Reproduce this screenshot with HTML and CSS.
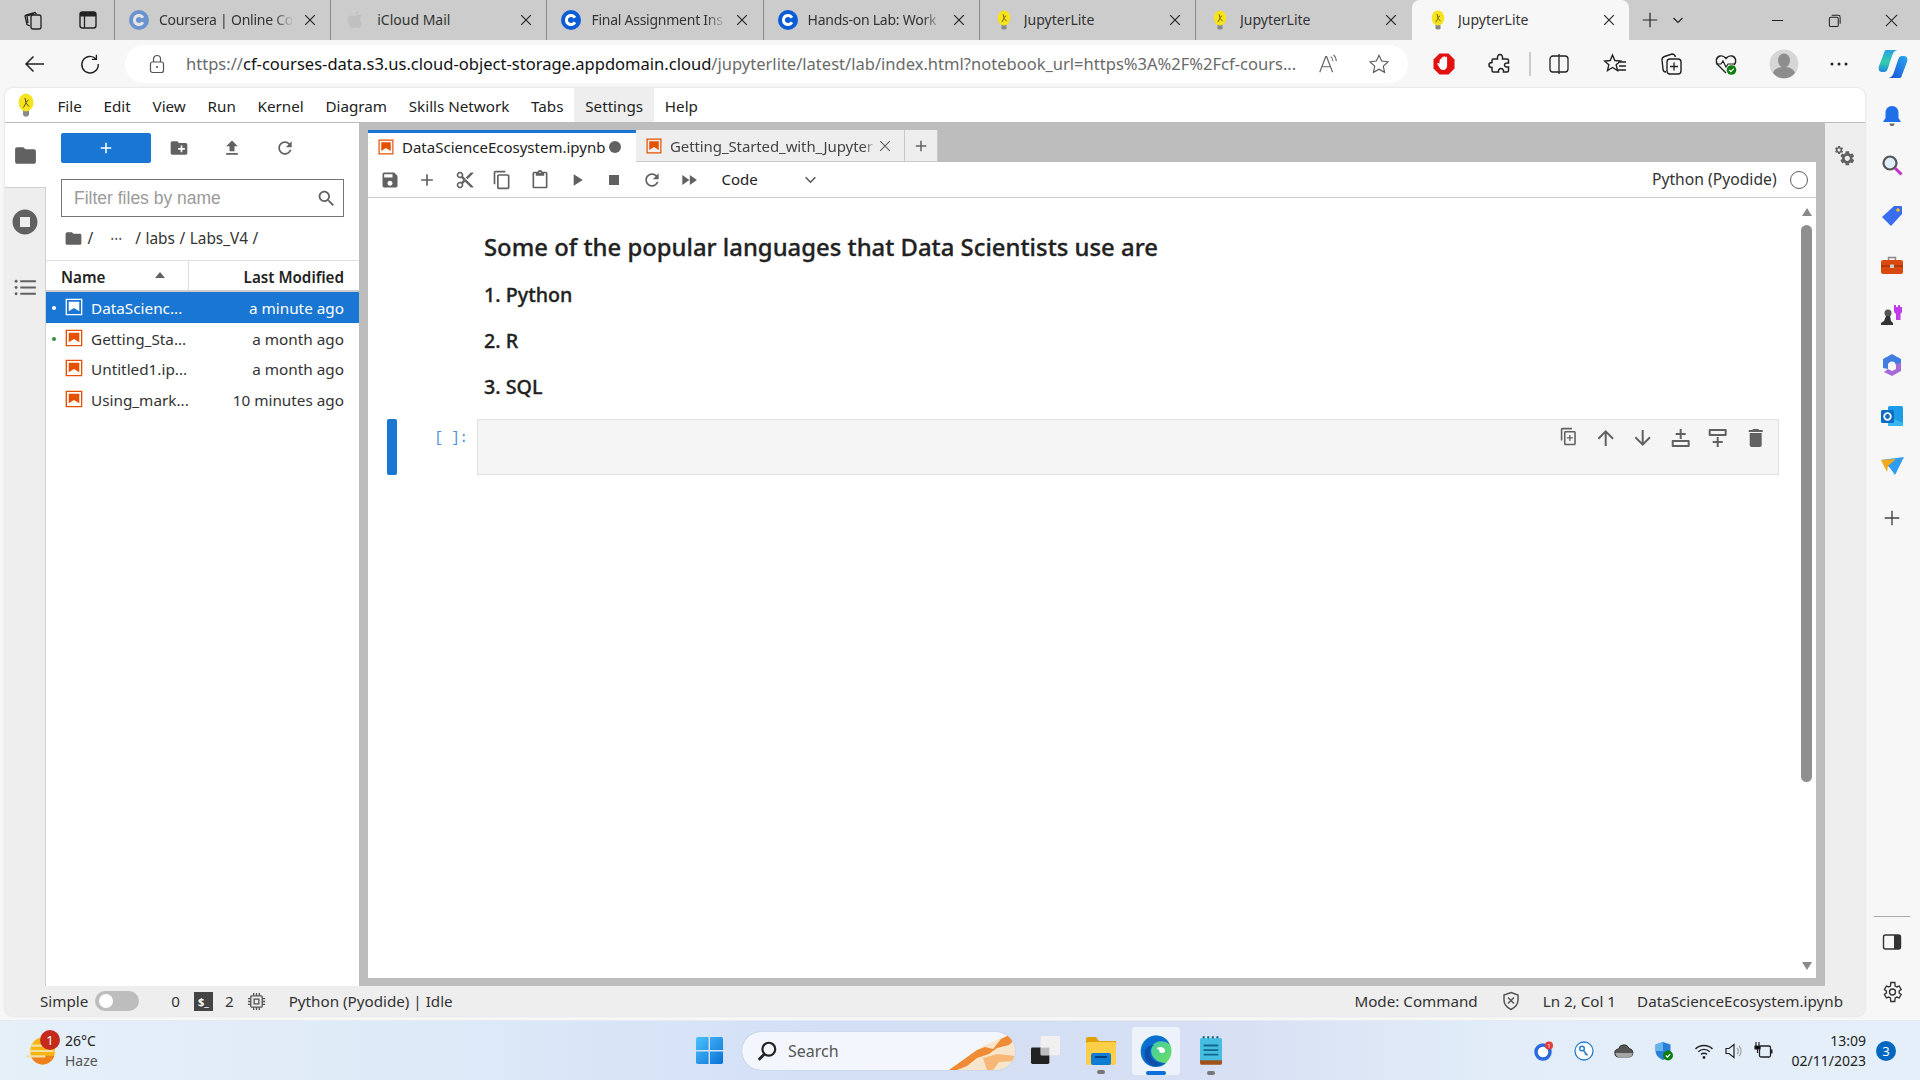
FILE: index.html
```html
<!doctype html>
<html>
<head>
<meta charset="utf-8">
<title>JupyterLite</title>
<link rel="stylesheet" href="styles.css">
</head>
<body>
<svg class="defs" width="0" height="0">
  <symbol id="i-save" viewBox="0 0 24 24"><path d="M17 3H5c-1.11 0-2 .9-2 2v14c0 1.1.89 2 2 2h14c1.1 0 2-.9 2-2V7l-4-4zm-5 16c-1.66 0-3-1.34-3-3s1.34-3 3-3 3 1.34 3 3-1.34 3-3 3zm3-10H5V5h10v4z"/></symbol>
  <symbol id="i-add" viewBox="0 0 24 24"><path d="M19 13h-6v6h-2v-6H5v-2h6V5h2v6h6v2z"/></symbol>
  <symbol id="i-cut" viewBox="0 0 24 24"><path d="M9.64 7.64c.23-.5.36-1.05.36-1.64 0-2.21-1.79-4-4-4S2 3.79 2 6s1.79 4 4 4c.59 0 1.14-.13 1.64-.36L10 12l-2.36 2.36C7.14 14.13 6.59 14 6 14c-2.21 0-4 1.79-4 4s1.79 4 4 4 4-1.79 4-4c0-.59-.13-1.14-.36-1.64L12 14l7 7h3v-1L9.64 7.64zM6 8c-1.1 0-2-.89-2-2s.9-2 2-2 2 .89 2 2-.9 2-2 2zm0 12c-1.1 0-2-.89-2-2s.9-2 2-2 2 .89 2 2-.9 2-2 2zm6-7.5c-.28 0-.5-.22-.5-.5s.22-.5.5-.5.5.22.5.5-.22.5-.5.5zM19 3l-6 6 2 2 7-7V3z"/></symbol>
  <symbol id="i-copy" viewBox="0 0 24 24"><path d="M16 1H4c-1.1 0-2 .9-2 2v14h2V3h12V1zm3 4H8c-1.1 0-2 .9-2 2v14c0 1.1.9 2 2 2h11c1.1 0 2-.9 2-2V7c0-1.1-.9-2-2-2zm0 16H8V7h11v14z"/></symbol>
  <symbol id="i-paste" viewBox="0 0 24 24"><path d="M19 2h-4.18C14.4.84 13.3 0 12 0c-1.3 0-2.4.84-2.82 2H5c-1.1 0-2 .9-2 2v16c0 1.1.9 2 2 2h14c1.1 0 2-.9 2-2V4c0-1.1-.9-2-2-2zm-7 0c.55 0 1 .45 1 1s-.45 1-1 1-1-.45-1-1 .45-1 1-1zm7 18H5V4h2v3h10V4h2v16z"/></symbol>
  <symbol id="i-run" viewBox="0 0 24 24"><path d="M8 5v14l11-7z"/></symbol>
  <symbol id="i-stop" viewBox="0 0 24 24"><path d="M6 6h12v12H6z"/></symbol>
  <symbol id="i-refresh" viewBox="0 0 24 24"><path d="M17.65 6.35C16.2 4.9 14.21 4 12 4c-4.42 0-7.99 3.58-7.99 8s3.57 8 7.99 8c3.73 0 6.84-2.55 7.73-6h-2.08c-.82 2.33-3.04 4-5.65 4-3.31 0-6-2.69-6-6s2.69-6 6-6c1.66 0 3.14.69 4.22 1.78L13 11h7V4l-2.35 2.35z"/></symbol>
  <symbol id="i-ff" viewBox="0 0 24 24"><path d="M4 18l8.5-6L4 6v12zm9-12v12l8.5-6L13 6z"/></symbol>
  <symbol id="i-upload" viewBox="0 0 24 24"><path d="M9 16h6v-6h4l-7-7-7 7h4v6zm-4 2h14v2H5z"/></symbol>
  <symbol id="i-folder" viewBox="0 0 24 24"><path d="M10 4H4c-1.1 0-1.99.9-1.99 2L2 18c0 1.1.9 2 2 2h16c1.1 0 2-.9 2-2V8c0-1.1-.9-2-2-2h-8l-2-2z"/></symbol>
  <symbol id="i-newfolder" viewBox="0 0 24 24"><path d="M20 6h-8l-2-2H4c-1.11 0-1.99.89-1.99 2L2 18c0 1.11.89 2 2 2h16c1.11 0 2-.89 2-2V8c0-1.11-.89-2-2-2zm-1 8h-3v3h-2v-3h-3v-2h3V9h2v3h3v2z"/></symbol>
  <symbol id="i-search" viewBox="0 0 24 24"><path d="M15.5 14h-.79l-.28-.27C15.41 12.59 16 11.11 16 9.5 16 5.91 13.09 3 9.5 3S3 5.91 3 9.5 5.91 16 9.5 16c1.61 0 3.09-.59 4.23-1.57l.27.28v.79l5 4.99L20.49 19l-4.99-5zm-6 0C7.01 14 5 11.99 5 9.5S7.01 5 9.5 5 14 7.01 14 9.5 11.99 14 9.5 14z"/></symbol>
  <symbol id="i-stopcircle" viewBox="0 0 24 24"><path d="M12 2C6.48 2 2 6.48 2 12s4.48 10 10 10 10-4.48 10-10S17.52 2 12 2zm4 14H8V8h8v8z"/></symbol>
  <symbol id="i-list" viewBox="0 0 24 24"><path d="M7 5h15v2H7zM7 11h15v2H7zM7 17h15v2H7z"/><circle cx="3" cy="6" r="1.4"/><circle cx="3" cy="12" r="1.4"/><circle cx="3" cy="18" r="1.4"/></symbol>
  <symbol id="i-up" viewBox="0 0 24 24"><path d="M4 12l1.41 1.41L11 7.83V20h2V7.83l5.58 5.59L20 12l-8-8-8 8z"/></symbol>
  <symbol id="i-down" viewBox="0 0 24 24"><path d="M20 12l-1.41-1.41L13 16.17V4h-2v12.17l-5.58-5.59L4 12l8 8 8-8z"/></symbol>
  <symbol id="i-trash" viewBox="0 0 24 24"><path d="M6 19c0 1.1.9 2 2 2h8c1.1 0 2-.9 2-2V7H6v12zM19 4h-3.5l-1-1h-5l-1 1H5v2h14V4z"/></symbol>
  <symbol id="i-dup" viewBox="0 0 24 24"><path d="M16 1H4c-1.1 0-2 .9-2 2v14h2V3h12V1zm3 4H8c-1.1 0-2 .9-2 2v14c0 1.1.9 2 2 2h11c1.1 0 2-.9 2-2V7c0-1.1-.9-2-2-2zm0 16H8V7h11v14zM12.7 10h1.6v3h3v1.6h-3v3h-1.6v-3h-3V13h3z"/></symbol>
  <symbol id="i-addabove" viewBox="0 0 24 24"><path d="M11 3h2v4h4v2h-4v4h-2V9H7V7h4zM4 14h16a1 1 0 0 1 1 1v5a1 1 0 0 1-1 1H4a1 1 0 0 1-1-1v-5a1 1 0 0 1 1-1zm1 2v3h14v-3z" fill-rule="evenodd"/></symbol>
  <symbol id="i-addbelow" viewBox="0 0 24 24"><path d="M4 3h16a1 1 0 0 1 1 1v5a1 1 0 0 1-1 1H4a1 1 0 0 1-1-1V4a1 1 0 0 1 1-1zm1 2v3h14V5zM11 11h2v4h4v2h-4v4h-2v-4H7v-2h4z" fill-rule="evenodd"/></symbol>
  <symbol id="i-gear" viewBox="0 0 24 24"><path d="M19.14 12.94c.04-.3.06-.61.06-.94 0-.32-.02-.64-.07-.94l2.03-1.58c.18-.14.23-.41.12-.61l-1.92-3.32c-.12-.22-.37-.29-.59-.22l-2.39.96c-.5-.38-1.03-.7-1.62-.94l-.36-2.54c-.04-.24-.24-.41-.48-.41h-3.84c-.24 0-.43.17-.47.41l-.36 2.54c-.59.24-1.13.57-1.62.94l-2.39-.96c-.22-.08-.47 0-.59.22L2.74 8.87c-.12.21-.08.47.12.61l2.03 1.58c-.05.3-.09.63-.09.94s.02.64.07.94l-2.03 1.58c-.18.14-.23.41-.12.61l1.92 3.32c.12.22.37.29.59.22l2.39-.96c.5.38 1.03.7 1.62.94l.36 2.54c.05.24.24.41.48.41h3.84c.24 0 .44-.17.47-.41l.36-2.54c.59-.24 1.13-.56 1.62-.94l2.39.96c.22.08.47 0 .59-.22l1.92-3.32c.12-.22.07-.47-.12-.61l-2.01-1.58zM12 15.6c-1.98 0-3.6-1.62-3.6-3.6s1.62-3.6 3.6-3.6 3.6 1.62 3.6 3.6-1.62 3.6-3.6 3.6z"/></symbol>
  <symbol id="i-nb" viewBox="0 0 22 22"><path d="M18.7 3.3v15.4H3.3V3.3h15.4m1.5-1.5H1.8v18.3h18.3l.1-18.3z"/><path d="M16.8 15.8l-5.8-3.6-5.8 3.6V5.2h11.6z"/></symbol>
  <symbol id="i-bulb" viewBox="0 0 20 24"><path fill="#888" d="M7 17h6v5l-1.500 1.500h-3L7 22z"/><ellipse cx="10" cy="9.500" rx="7.500" ry="9" fill="#f5e31d"/><path d="M9 5l1 5-2.500 4.500M10 10l3 3.500M10 9l2.500-2" stroke="#5a4d00" stroke-width="1" fill="none"/></symbol>
  <symbol id="i-coursera" viewBox="0 0 24 24"><circle cx="12" cy="12" r="12" fill="#0b5cd5"/><path d="M16.700 9.200a5.500 5.500 0 1 0 0 5.600" stroke="#fff" stroke-width="3.600" fill="none"/></symbol>
  <symbol id="i-x" viewBox="0 0 16 16"><path d="M2.500 2.500l11 11M13.500 2.500l-11 11" stroke="currentColor" stroke-width="1.300" fill="none"/></symbol>
</svg>

<div class="tabstrip">
  <div class="stripicons">
    <svg class="s22" viewBox="0 0 22 22"><g fill="none" stroke="#222" stroke-width="1.300"><rect x="9" y="6" width="10" height="14" rx="2"/><path d="M8 17l-3-1.500-2-8.500 1-1 9-2.500 1.500 1.500M6 14l-1-7 7-2"/></g></svg>
    <svg class="s22" viewBox="0 0 22 22"><rect x="3" y="3" width="16" height="16" rx="2.500" fill="none" stroke="#222" stroke-width="1.400"/><path d="M3 3h16v4.500H3z" fill="#222"/><path d="M7.500 7v12" stroke="#222" stroke-width="1.300"/></svg>
  </div>
  <div class="btab faded"><svg class="fav"><use href="#i-coursera"/></svg><span class="btab-title fadeout">Coursera | Online Co</span><svg class="btab-x"><use href="#i-x"/></svg></div>
  <div class="btab faded apple"><svg class="fav" viewBox="0 0 20 20"><path fill="#b5b5b5" d="M13.500 1c.1 1.700-1.400 3.400-3 3.300C10.300 2.700 12 1.100 13.500 1zM10.400 5.300c.9 0 1.900-.8 3.300-.8 1.200 0 2.400.6 3.100 1.700-2.700 1.600-2.300 5.300.5 6.500-.6 1.700-2.300 5.300-4.100 5.300-1 0-1.500-.7-2.800-.7s-1.900.7-2.800.7c-2.300 0-4.800-5-4.800-8 0-3.200 2-4.500 3.900-4.500 1.300 0 2.100.8 3.700.8z"/></svg><span class="btab-title">iCloud Mail</span><svg class="btab-x"><use href="#i-x"/></svg></div>
  <div class="btab"><svg class="fav"><use href="#i-coursera"/></svg><span class="btab-title fadeout">Final Assignment Ins</span><svg class="btab-x"><use href="#i-x"/></svg></div>
  <div class="btab"><svg class="fav"><use href="#i-coursera"/></svg><span class="btab-title fadeout">Hands-on Lab: Work</span><svg class="btab-x"><use href="#i-x"/></svg></div>
  <div class="btab"><svg class="fav"><use href="#i-bulb"/></svg><span class="btab-title">JupyterLite</span><svg class="btab-x"><use href="#i-x"/></svg></div>
  <div class="btab"><svg class="fav"><use href="#i-bulb"/></svg><span class="btab-title">JupyterLite</span><svg class="btab-x"><use href="#i-x"/></svg></div>
  <div class="btab active"><svg class="fav"><use href="#i-bulb"/></svg><span class="btab-title">JupyterLite</span><svg class="btab-x"><use href="#i-x"/></svg></div>
  <svg class="newtab" viewBox="0 0 20 20"><path d="M10 2v16M2 10h16" stroke="#222" stroke-width="1.300"/></svg>
  <svg class="tabmenu" viewBox="0 0 12 12"><path d="M1.500 4l4.500 4.500L10.500 4" stroke="#222" stroke-width="1.200" fill="none"/></svg>
  <div class="wincontrols">
    <svg viewBox="0 0 16 16"><path d="M2 8h12" stroke="#222" stroke-width="1.100"/></svg>
    <svg viewBox="0 0 16 16"><rect x="2.500" y="4.500" width="9.500" height="10" rx="1.500" fill="none" stroke="#222" stroke-width="1.100"/><path d="M5 2.500h7a2 2 0 0 1 2 2v7" fill="none" stroke="#222" stroke-width="1.100"/></svg>
    <svg viewBox="0 0 16 16"><path d="M2 2l12 12M14 2L2 14" stroke="#222" stroke-width="1.100"/></svg>
  </div>
</div>

<div class="navbar">
  <svg class="nav-back" viewBox="0 0 24 24"><path d="M21 12H3.500M10.500 4.500L3 12l7.500 7.500" stroke="#222" stroke-width="1.500" fill="none"/></svg>
  <svg class="nav-reload" viewBox="0 0 24 24"><path d="M18.500 6.500A9 9 0 1 0 21 12M19 2v5h-5" stroke="#222" stroke-width="1.500" fill="none"/></svg>
  <div class="addressbar">
    <svg class="lock" viewBox="0 0 20 20"><rect x="3.500" y="8" width="13" height="10.500" rx="2" fill="none" stroke="#555" stroke-width="1.200"/><path d="M6.500 8V5a3.500 3.500 0 0 1 7 0v3" fill="none" stroke="#555" stroke-width="1.200"/><circle cx="10" cy="13" r="1.100" fill="#555"/></svg>
    <span class="url"><span class="dim">https://</span>cf-courses-data.s3.us.cloud-object-storage.appdomain.cloud<span class="dim">/jupyterlite/latest/lab/index.html?notebook_url=https%3A%2F%2Fcf-cours...</span></span>
    <svg class="addr-read" viewBox="0 0 24 24"><path d="M3 21L9.500 4h1L17 21M6 15h8" stroke="#666" stroke-width="1.300" fill="none"/><path d="M15 4a6 6 0 0 1 2.500 5M18 2a9 9 0 0 1 3 7" stroke="#666" stroke-width="1.100" fill="none"/></svg>
    <svg class="addr-star" viewBox="0 0 24 24"><path d="M12 2.500l2.900 6.300 6.900.8-5.100 4.700 1.400 6.800-6.100-3.400-6.100 3.400 1.400-6.800L2.200 9.600l6.900-.8z" stroke="#555" stroke-width="1.200" fill="none"/></svg>
  </div>
  <div class="navicons">
    <svg class="n1" viewBox="0 0 24 24"><path fill="#e0110f" d="M7.500 1.500h9l6 6v9l-6 6h-9l-6-6v-9z"/><path fill="#fff" d="M7.500 10c0-2 .5-3 1-3s.7.500.7 1c0-2 .6-3 1.100-3s.8.500.8 1.500c0-1.500.6-2.500 1.100-2.500s.9.800.9 2c.2-1 .7-1.500 1.200-1.500s.8.800.8 2v7c0 2.500-1.500 4.500-4 4.500-2 0-3-1-4-3l-2-3.500c1-1 2-.5 2.400.5z"/></svg>
    <svg class="n2" viewBox="0 0 24 24"><path d="M5 7h4.500c-.5-3 1-4.500 2.500-4.500s3 1.500 2.500 4.500H19c1 0 1.500.5 1.500 1.500V11c-3-.5-4 1-4 2s1 2.500 4 2v3.500c0 1-.5 1.500-1.500 1.500h-3.500c.5-2-1-3.500-2.500-3.500s-3 1.500-2.500 3.500H5.500c-1 0-1.500-.5-1.500-1.500v-3c-2 0-3-1-3-2.500s1-2.500 3-2.500V8.500C4 7.500 4 7 5 7z" fill="none" stroke="#222" stroke-width="1.500"/></svg>
    <span class="navsep"></span>
    <svg class="n3" viewBox="0 0 24 24"><rect x="3" y="4" width="18" height="16" rx="3" fill="none" stroke="#222" stroke-width="1.300"/><path d="M12 2v20" stroke="#222" stroke-width="1.300"/></svg>
    <svg class="n4" viewBox="0 0 24 24"><path d="M9.500 3l2.300 5.500 5.700.5-4.300 3.800 1.300 5.700-5-3-5 3 1.300-5.700L1.500 9l5.700-.5zM15 10h8M16 14h7M15 18h8" fill="none" stroke="#222" stroke-width="1.400"/></svg>
    <svg class="n5" viewBox="0 0 24 24"><path d="M7 20c-2 0-3-1-3-3L3 8c0-2 1-3 2.500-3.500L13 2c2 0 3 1 3.500 3" fill="none" stroke="#222" stroke-width="1.400"/><rect x="8" y="7" width="14" height="15" rx="3" fill="none" stroke="#222" stroke-width="1.400"/><path d="M15 10.500v8M11 14.500h8" stroke="#222" stroke-width="1.300"/></svg>
    <svg class="n6" viewBox="0 0 24 24"><path d="M12 21L4 13c-3-3-2-8 2-9 2.500-.5 4.500.5 6 2.500 1.500-2 3.500-3 6-2.500 4 1 5 6 2 9" fill="none" stroke="#222" stroke-width="1.400"/><path d="M2 12h5l2-3 3 6 2-3h6" fill="none" stroke="#222" stroke-width="1.200"/><circle cx="17.500" cy="18" r="4.800" fill="#107c10"/><path d="M15.300 18l1.600 1.600 2.900-3" stroke="#fff" stroke-width="1.200" fill="none"/></svg>
    <svg class="n7" viewBox="0 0 30 30"><circle cx="15" cy="15" r="14.500" fill="#d6d6d6"/><ellipse cx="15" cy="11.500" rx="6" ry="7" fill="#8d8d8d"/><path d="M4 24c2-5 6-6 11-6s9 1 11 6a14 14 0 0 1-22 0z" fill="#8d8d8d"/></svg>
    <svg class="n8" viewBox="0 0 24 24"><circle cx="5" cy="12" r="1.500" fill="#222"/><circle cx="12" cy="12" r="1.500" fill="#222"/><circle cx="19" cy="12" r="1.500" fill="#222"/></svg>
    <svg class="n9" viewBox="0 0 30 30"><defs><linearGradient id="cp1" x1="0" y1="0" x2="0" y2="1"><stop offset="0" stop-color="#2a9fe8"/><stop offset=".55" stop-color="#34cfa8"/><stop offset="1" stop-color="#1f86dc"/></linearGradient><linearGradient id="cp2" x1="1" y1="0" x2="0" y2="1"><stop offset="0" stop-color="#2aa8f0"/><stop offset="1" stop-color="#1a50d8"/></linearGradient></defs><path fill="url(#cp1)" d="M8 1h11c-3 1-4 3-5 6l-4 12c-1 3-2 4-4 4H4c-3 0-4-3-3-6L6 4c.5-2 1-3 2-3z"/><path fill="url(#cp2)" d="M22 29H11c3-1 4-3 5-6l4-12c1-3 2-4 4-4h2c3 0 4 3 3 6l-5 13c-.5 2-1 3-2 3z"/></svg>
  </div>
</div>

<div class="pagearea">
  <div class="page">
    <div class="menubar">
      <svg class="menulogo"><use href="#i-bulb"/></svg>
      <span class="menu">File</span><span class="menu">Edit</span><span class="menu">View</span><span class="menu">Run</span><span class="menu">Kernel</span><span class="menu">Diagram</span><span class="menu">Skills Network</span><span class="menu">Tabs</span><span class="menu open">Settings</span><span class="menu">Help</span>
    </div>

    <div class="workarea">
      <div class="activity">
        <div class="act on"><svg><use href="#i-folder"/></svg></div>
        <div class="act two"><svg class="big"><use href="#i-stopcircle"/></svg></div>
        <div class="act"><svg><use href="#i-list"/></svg></div>
      </div>

      <div class="filepanel">
        <div class="filetools">
          <div class="newbtn"><svg><use href="#i-add"/></svg></div>
          <svg class="ft"><use href="#i-newfolder"/></svg>
          <svg class="ft"><use href="#i-upload"/></svg>
          <svg class="ft"><use href="#i-refresh"/></svg>
        </div>
        <div class="filter"><span>Filter files by name</span><svg><use href="#i-search"/></svg></div>
        <div class="crumbs">
          <svg><use href="#i-folder"/></svg><span class="c1">/</span>
          <span class="dots">•••</span><span>/</span><span>labs</span><span>/</span><span>Labs_V4</span><span>/</span>
        </div>
        <div class="listhead">
          <div class="col-name">Name<span class="caret"></span></div>
          <div class="col-mod">Last Modified</div>
        </div>
        <div class="filerow sel"><i class="dot"></i><svg><use href="#i-nb"/></svg><span class="fname">DataScienc...</span><span class="fdate">a minute ago</span></div>
        <div class="filerow"><i class="dot green"></i><svg><use href="#i-nb"/></svg><span class="fname">Getting_Sta...</span><span class="fdate">a month ago</span></div>
        <div class="filerow"><i class="dot none"></i><svg><use href="#i-nb"/></svg><span class="fname">Untitled1.ip...</span><span class="fdate">a month ago</span></div>
        <div class="filerow"><i class="dot none"></i><svg><use href="#i-nb"/></svg><span class="fname">Using_mark...</span><span class="fdate">10 minutes ago</span></div>
      </div>

      <div class="main">
        <div class="doctabs">
          <div class="doctab cur"><svg><use href="#i-nb"/></svg><span class="dt-name">DataScienceEcosystem.ipynb</span><i class="dirty"></i></div>
          <div class="doctab two"><svg><use href="#i-nb"/></svg><span class="dt-name fade">Getting_Started_with_Jupyter</span><svg class="dt-x"><use href="#i-x"/></svg></div>
          <div class="doctab plus"><svg><use href="#i-add"/></svg></div>
        </div>
        <div class="nbtools">
          <svg><use href="#i-save"/></svg>
          <svg><use href="#i-add"/></svg>
          <svg><use href="#i-cut"/></svg>
          <svg><use href="#i-copy"/></svg>
          <svg><use href="#i-paste"/></svg>
          <svg><use href="#i-run"/></svg>
          <svg><use href="#i-stop"/></svg>
          <svg><use href="#i-refresh"/></svg>
          <svg><use href="#i-ff"/></svg>
          <span class="celltype">Code</span>
          <svg class="chev" viewBox="0 0 12 12"><path d="M1.500 4l4.500 4.500L10.500 4" stroke="#555" stroke-width="1.400" fill="none"/></svg>
          <span class="kernel">Python (Pyodide)</span>
          <i class="kstatus"></i>
        </div>
        <div class="notebook">
          <div class="cells">
            <h1>Some of the popular languages that Data Scientists use are</h1>
            <p>1. Python</p>
            <p>2. R</p>
            <p>3. SQL</p>
            <div class="codecell">
              <div class="collapser"></div>
              <div class="prompt">[ ]:</div>
              <div class="input">
                <svg class="cell-dup"><use href="#i-dup"/></svg>
                <svg><use href="#i-up"/></svg>
                <svg><use href="#i-down"/></svg>
                <svg><use href="#i-addabove"/></svg>
                <svg><use href="#i-addbelow"/></svg>
                <svg><use href="#i-trash"/></svg>
              </div>
            </div>
          </div>
          <div class="scroll">
            <i class="arr up"></i>
            <div class="track"><div class="thumb"></div></div>
            <i class="arr dn"></i>
          </div>
        </div>
      </div>

      <div class="rightbar"><svg viewBox="0 0 24 24"><use href="#i-gear" x="5" y="5" width="19" height="19"/><use href="#i-gear" x="0" y="0" width="11" height="11"/></svg></div>
    </div>

    <div class="statusbar">
      <span class="simple">Simple</span><span class="toggle"><i></i></span>
      <span class="st-0">0</span>
      <span class="term">$_</span>
      <span class="st-2">2</span>
      <svg class="chip" viewBox="0 0 20 20"><g fill="none" stroke="#555" stroke-width="1.400"><rect x="4" y="4" width="12" height="12" rx="1"/><rect x="7.500" y="7.500" width="5" height="5"/><path d="M7 1v3M10 1v3M13 1v3M7 16v3M10 16v3M13 16v3M1 7h3M1 10h3M1 13h3M16 7h3M16 10h3M16 13h3"/></g></svg>
      <span class="st-kernel">Python (Pyodide) | Idle</span>
      <span class="st-mode">Mode: Command</span>
      <svg class="shield" viewBox="0 0 20 20"><path d="M10 1.500l7 2.500v5c0 4.500-3 7.500-7 9.500-4-2-7-5-7-9.500V4z" fill="none" stroke="#555" stroke-width="1.500"/><path d="M7 6.500l6 6M13 6.500l-6 6" stroke="#555" stroke-width="1.500"/></svg>
      <span class="st-ln">Ln 2, Col 1</span>
      <span class="st-file">DataScienceEcosystem.ipynb</span>
    </div>
  </div>

  <div class="edgebar">
    <svg class="eb first" viewBox="0 0 24 24"><path fill="#1f6fe8" d="M12 2c-4 0-6.500 3-6.500 7v5L3 18h18l-2.500-4V9c0-4-2.500-7-6.500-7z"/><path fill="#666" d="M9.500 19.500h5a2.500 2.500 0 0 1-5 0z"/></svg>
    <svg class="eb" viewBox="0 0 24 24"><circle cx="10" cy="10" r="6.500" fill="#dfeefa" stroke="#555" stroke-width="2.200"/><path d="M15 15l6.500 6.500" stroke="#c62fc9" stroke-width="3"/></svg>
    <svg class="eb" viewBox="0 0 24 24"><path fill="#3a6cf0" d="M14 2h7a1 1 0 0 1 1 1v7L11 22 2 13z"/><circle cx="18" cy="6" r="1.800" fill="#f5c518"/></svg>
    <svg class="eb box" viewBox="0 0 24 24"><path d="M8.500 6V3.500h7V6" fill="none" stroke="#888" stroke-width="1.500"/><rect x="1" y="6" width="22" height="14" rx="2" fill="#d9480f"/><path d="M1 12h22" stroke="#a5330a" stroke-width="1.500"/><rect x="10" y="10.500" width="4" height="3.500" fill="#ccc"/></svg>
    <svg class="eb" viewBox="0 0 24 24"><path fill="#c13ce8" d="M14 2h2v2h2V2h2v2h2V2v7l-1.500 2v6H16v-6L14 9z"/><circle cx="8" cy="10" r="3.500" fill="#555"/><path fill="#333" d="M6 13h4l1 5 2 2v2H1v-2l3-2z"/></svg>
    <svg class="eb" viewBox="0 0 24 24"><path fill="#3f7ee0" d="M12 1l9 5v4l-5 2-4-3-4 2v5l-5-1V6z"/><path fill="#a66ad8" d="M21 10v8l-9 5-8-4 4-3 4 2 4-2v-5z"/><circle cx="12" cy="12" r="3.600" fill="#f7f7f7"/></svg>
    <svg class="eb" viewBox="0 0 24 24"><rect x="8" y="2" width="15" height="20" rx="1.500" fill="#1c9ce8"/><path d="M8 12l15 7v2a1 1 0 0 1-1 1H9a1 1 0 0 1-1-1z" fill="#35b8f0"/><rect x="1" y="6" width="13" height="13" rx="1.500" fill="#0a6cc4"/><circle cx="7.500" cy="12.500" r="3.300" fill="none" stroke="#fff" stroke-width="1.800"/></svg>
    <svg class="eb" viewBox="0 0 24 24"><path fill="#2e9cf0" d="M1 6l23-3-9 18-5-7z"/><path fill="#f2a81d" d="M1 6l15-1L8 12l-1 6z"/></svg>
    <svg class="eb plus" viewBox="0 0 24 24"><path d="M12 4v16M4 12h16" stroke="#444" stroke-width="1.500"/></svg>
    <div class="eb-bottom">
      <span class="eb-line"></span>
      <svg class="eb" viewBox="0 0 24 24"><rect x="3.500" y="5" width="17" height="14" rx="2" fill="none" stroke="#333" stroke-width="1.400"/><path d="M14 5h5a1.500 1.500 0 0 1 1.500 1.500v11a1.500 1.500 0 0 1-1.500 1.500h-5z" fill="#333"/></svg>
      <svg class="eb gear" viewBox="0 0 24 24"><path d="M19.140 12.940c.04-.3.060-.61.060-.94s-.02-.64-.07-.94l2.030-1.580-2-3.470-2.390.96c-.5-.38-1.030-.7-1.620-.94L14.800 2.500h-4l-.36 3.530c-.59.24-1.130.57-1.620.94l-2.390-.96-2 3.470 2.030 1.580c-.05.3-.09.630-.09.940s.02.640.07.940L4.410 14.520l2 3.470 2.390-.96c.5.380 1.030.700 1.620.940l.36 3.530h4l.36-3.530c.59-.24 1.130-.56 1.620-.94l2.390.96 2-3.470z" fill="none" stroke="#333" stroke-width="1.400"/><circle cx="12.500" cy="12" r="3" fill="none" stroke="#333" stroke-width="1.400"/></svg>
    </div>
  </div>
</div>

<div class="taskbar">
  <div class="weather">
    <svg class="wicon" viewBox="0 0 28 26"><ellipse cx="15.500" cy="13" rx="11.500" ry="12.500" fill="#f7b50f"/><path d="M15.500 25.500c-5 0-9.500-3-11-8h22c-1.500 5-6 8-11 8z" fill="#f0801a"/><path d="M5 8h15M3 13h23M0 18h18" stroke="#f2dfa8" stroke-width="2"/></svg>
    <span class="wbadge">1</span>
    <div class="wtext"><div>26°C</div><div class="wsub">Haze</div></div>
  </div>
  <div class="tb-center">
    <svg class="startbtn" viewBox="0 0 30 30"><defs><linearGradient id="win" x1="0" y1="0" x2="1" y2="1"><stop offset="0" stop-color="#4cc3fa"/><stop offset="1" stop-color="#0a6fd8"/></linearGradient></defs><path fill="url(#win)" d="M1 3a2 2 0 0 1 2-2h11v13.500H1zM15.500 1H27a2 2 0 0 1 2 2v11.500H15.500zM1 16h13v13H3a2 2 0 0 1-2-2zM15.500 16H29v11a2 2 0 0 1-2 2H15.500z"/></svg>
    <div class="searchbox">
      <svg class="sb-icon" viewBox="0 0 24 24"><circle cx="14" cy="10" r="7" fill="none" stroke="#222" stroke-width="2.400"/><path d="M9 15.500L3 21.500" stroke="#222" stroke-width="3"/></svg>
      <span class="sb-text">Search</span>
      <svg class="sb-art" viewBox="0 0 66 38"><path fill="#f7e6cc" d="M0 38L34 14 66 0v38z"/><path fill="#ef8a35" d="M0 38l14-10 14-10 8-3 8 2 8-10 10-5 4 5-6 6-12 3-8 6-12 4-10 8-10 4z"/><path fill="#f7b777" d="M34 26l14-4 18 2v5l-16 1-6 8h-6z"/></svg>
    </div>
    <svg class="tv" viewBox="0 0 30 30"><rect x="0" y="12" width="19" height="17" rx="1.500" fill="#222"/><rect x="10" y="0" width="20" height="20" rx="1.500" fill="#f0f0f0"/><rect x="10" y="12" width="9" height="8" fill="#bdbdbd"/></svg>
    <div class="tbapp app-f"><svg viewBox="0 0 30 28"><path fill="#dfa009" d="M0 2a2 2 0 0 1 2-2h8l3 4h17v6H0z"/><rect y="5" width="30" height="23" rx="2" fill="#fdcf48"/><rect x="5" y="16" width="20" height="12" rx="2" fill="#0f7cd6"/><path d="M9 20h12" stroke="#073f7a" stroke-width="2"/></svg><i class="rundot"></i></div>
    <div class="tbapp app-e on"><svg viewBox="0 0 32 32"><defs><linearGradient id="ed1" x1="0" y1="0" x2="1" y2="1"><stop offset="0" stop-color="#33c5c0"/><stop offset="1" stop-color="#6fe05a"/></linearGradient></defs><circle cx="16" cy="16" r="15.500" fill="url(#ed1)"/><path fill="#0a6fd0" d="M1 15C2 6 9 .500 16 .500c7 0 12 4 13.500 9C27 6.500 22 6 18.500 6.500 12 8 10 14 12 20c2 5 8 8 14 8-3 3-7 4-10 4C7 32 0 25 1 15z"/><path fill="#0c4fa8" d="M14 31c-6-1-11-7-9-15 1-4 5-6 9-6 -3 2-5 5-3.500 10 1 5 7 8 12 8.500C20 31 17 31.500 14 31z"/><path fill="#fff" d="M17 13c3-2 7-1 8 2 .5 2-1 3-3 3-2 0-3.500-1-2.500-3-1-.5-2-.5-2.500-2z"/></svg><i class="rundot act-bar"></i></div>
    <div class="tbapp app-n"><svg viewBox="0 0 24 32"><path d="M4 0v4M9 0v4M14 0v4M19 0v4" stroke="#0c5d83" stroke-width="2.200"/><rect y="2" width="24" height="26" rx="1.500" fill="#45bde0"/><path d="M4 10h16M4 15h16M4 20h16" stroke="#10668d" stroke-width="2"/><path d="M0 26h24v3a2 2 0 0 1-2 2H2a2 2 0 0 1-2-2z" fill="#a0521c"/></svg><i class="rundot"></i></div>
  </div>
  <div class="tray">
    <svg viewBox="0 0 20 20"><circle cx="9" cy="11" r="7" fill="#fff" stroke="#2b6be0" stroke-width="3.500"/><circle cx="15" cy="4.500" r="4" fill="#e53935"/><text x="15" y="7" class="traynum">1</text></svg>
    <svg viewBox="0 0 20 20"><circle cx="10" cy="10" r="9" fill="#fff" stroke="#2b7dd0" stroke-width="1.300"/><circle cx="8" cy="7.500" r="2.300" fill="none" stroke="#2b7dd0" stroke-width="1.500"/><path d="M9.500 9.500l4 5M12 12.500l-1.200 1" stroke="#2b7dd0" stroke-width="1.500"/></svg>
    <svg viewBox="0 0 20 20"><path fill="#555" stroke="#222" stroke-width=".8" d="M5 16a4 4 0 0 1-.5-8A5.500 5.500 0 0 1 15 7.500 4.300 4.300 0 0 1 15.500 16z"/><path fill="#a5a5a5" d="M1.500 12h17a4 4 0 0 1-3 4H5a4 4 0 0 1-3.500-4z"/></svg>
    <svg viewBox="0 0 20 20"><path fill="#2680d9" d="M9 1l7.500 2.500v6c0 4.500-3 7.500-7.500 9.500C4.500 17 1.500 14 1.500 9.500v-6z"/><path fill="#66b3ee" d="M9 1v9H1.500V3.500z"/><circle cx="14" cy="14.500" r="5" fill="#107c10"/><path d="M11.800 14.500l1.600 1.600 2.800-3" stroke="#fff" stroke-width="1.200" fill="none"/></svg>
    <svg viewBox="0 0 20 20"><path d="M1.500 8a12 12 0 0 1 17 0M4.300 10.800a8 8 0 0 1 11.400 0M7 13.500a4.200 4.200 0 0 1 6 0" fill="none" stroke="#222" stroke-width="1.400"/><circle cx="10" cy="16.500" r="1.400" fill="#222"/></svg>
    <svg viewBox="0 0 20 20"><path d="M2 7.500h3L10 3.500v13l-5-4H2z" fill="none" stroke="#222" stroke-width="1.200"/><path d="M13 7a4 4 0 0 1 0 6M15 5a7 7 0 0 1 0 10" fill="none" stroke="#999" stroke-width="1.100"/></svg>
    <svg viewBox="0 0 20 20"><rect x="5.500" y="5" width="11" height="11" rx="1.500" fill="none" stroke="#222" stroke-width="1.300"/><path d="M16.500 8.500h2v4h-2" fill="#222"/><path d="M2 1v4M5 1v4M1 5h5v3H1zM3.500 8v4" stroke="#222" stroke-width="1.200"/></svg>
    <div class="clock"><div>13:09</div><div>02/11/2023</div></div>
    <span class="notif">3</span>
  </div>
</div>
</body>
</html>
```

FILE: styles.css
```css
* {
  box-sizing: border-box;
}

html, body {
  margin: 0;
  height: 100%;
}

body {
  width: 1920px;
  height: 1080px;
  overflow: hidden;
  display: flex;
  flex-direction: column;
  font-family: "Noto Sans", "Open Sans", sans-serif;
  color: #222;
  background: #f7f7f7;
}

i {
  display: block;
}

.defs {
  position: absolute;
}

/* browser chrome */
.tabstrip {
  height: 40px;
  background: #ccc;
  display: flex;
  align-items: center;
}

.stripicons {
  width: 114px;
  display: flex;
  gap: 33px;
  padding-left: 22px;
}

.s22 {
  width: 22px;
  height: 22px;
}

.btab {
  width: 216.2px;
  height: 40px;
  display: flex;
  align-items: center;
  padding-left: 14px;
  font-size: 14px;
  color: #333;
  border-left: 1px solid #8a8a8a;
  background-clip: padding-box;
}

.btab .fav {
  width: 20px;
  height: 20px;
  flex: none;
}

.btab.faded .fav {
  opacity: .5;
}

.btab-title {
  margin-left: 10px;
  margin-top: -2px;
  width: 135px;
  white-space: nowrap;
  overflow: hidden;
}

.btab-title.fadeout {
  letter-spacing: -.25px;
  -webkit-mask-image: linear-gradient(90deg, #000 85%, transparent 100%);
  mask-image: linear-gradient(90deg, #000 85%, transparent 100%);
}

.btab.apple .btab-title {
  margin-left: 12px;
  width: 133px;
}

.btab-x {
  width: 14px;
  height: 14px;
  margin-left: 9px;
  color: #222;
}

.btab.active {
  background: #f7f7f7;
  border: 0;
  border-radius: 8px 8px 0 0;
  align-self: flex-end;
  padding-left: 16px;
  width: 217px;
}

.btab:has(+ .active) {
  width: 217px;
}

.newtab {
  width: 18px;
  height: 18px;
  margin-left: 12px;
}

.tabmenu {
  width: 12px;
  height: 12px;
  margin-left: 13px;
}

.wincontrols {
  margin-left: auto;
  display: flex;
  gap: 42px;
  padding-right: 21px;
}

.wincontrols svg {
  width: 15px;
  height: 15px;
}

.navbar {
  height: 48px;
  display: flex;
  align-items: center;
  background: #f7f7f7;
}

.nav-back {
  width: 24px;
  height: 24px;
  margin-left: 23px;
}

.nav-reload {
  width: 22px;
  height: 22px;
  margin-left: 32px;
}

.addressbar {
  margin-left: 24px;
  width: 1283px;
  height: 38px;
  background: #fff;
  border-radius: 19px;
  display: flex;
  align-items: center;
}

.lock {
  width: 20px;
  height: 20px;
  margin-left: 22px;
}

.url {
  margin-left: 19px;
  width: 1114px;
  font-size: 16.55px;
  white-space: nowrap;
  overflow: hidden;
  color: #111;
  line-height: 24px;
}

.url .dim {
  color: #6a6a6a;
}

.addr-read {
  width: 22px;
  height: 22px;
  margin-left: 17px;
}

.addr-star {
  width: 22px;
  height: 22px;
  margin-left: 29px;
}

.navicons {
  display: flex;
  align-items: center;
  flex: 1;
}

.navicons svg {
  width: 24px;
  height: 24px;
  flex: none;
}

.n1 { margin-left: 24px; }
.n2 { margin-left: 32px; }
.navsep { width: 2px; height: 24px; background: #ccc; margin-left: 17px; }
.navicons .n3 { margin-left: 16px; }
.navicons .n4 { margin-left: 32px; }
.navicons .n5 { margin-left: 32px; }
.navicons .n6 { margin-left: 31px; }
.navicons .n7 { width: 30px; height: 30px; margin-left: 31px; }
.navicons .n8 { margin-left: 28px; }
.navicons .n9 { width: 30px; height: 30px; margin-left: 27px; }

/* page */
.pagearea {
  flex: 1;
  display: flex;
  min-height: 0;
  padding-left: 5px;
}

.page {
  width: 1860px;
  height: 928px;
  background: #eee;
  border-radius: 8px;
  display: flex;
  flex-direction: column;
  overflow: hidden;
  box-shadow: 0 0 2px #c8c8c8;
}

.menubar {
  height: 34px;
  background: #fff;
  display: flex;
  align-items: center;
  font-size: 15.2px;
  color: #222;
}

.menulogo {
  width: 20px;
  height: 24px;
  margin-left: 11px;
  margin-right: 10.6px;
}

.menu {
  height: 34px;
  line-height: 36px;
  padding: 0 10.9px;
}

.menu.open {
  background: #eee;
}

.workarea {
  flex: 1;
  display: flex;
  min-height: 0;
  border-top: 1px solid #bdbdbd;
}

.activity {
  width: 41px;
  background: #eee;
  border-right: 1px solid #d0d0d0;
}

.act {
  height: 65px;
  display: flex;
  align-items: center;
  justify-content: center;
  fill: #616161;
}

.act.two {
  height: 67px;
}

.act.on {
  background: #fff;
  border-bottom: 1px solid #d0d0d0;
  margin-right: -1px;
}

.act svg {
  width: 25px;
  height: 25px;
}

.act svg.big {
  width: 30px;
  height: 30px;
}

.filepanel {
  width: 313px;
  background: #fff;
  font-size: 15.2px;
  color: #333;
}

.filetools {
  height: 56px;
  padding: 10px 0 0 15px;
  display: flex;
  align-items: flex-start;
}

.newbtn {
  width: 90px;
  height: 30px;
  background: #1976d2;
  border-radius: 2px;
  display: flex;
  align-items: center;
  justify-content: center;
  fill: #fff;
}

.newbtn svg {
  width: 18px;
  height: 18px;
}

.ft {
  width: 20px;
  height: 20px;
  fill: #616161;
  margin-top: 5px;
  margin-left: 33px;
}

.ft:nth-child(2) {
  margin-left: 18px;
}

.filter {
  margin-left: 15px;
  width: 283px;
  height: 38px;
  border: 1px solid #757575;
  display: flex;
  align-items: center;
  justify-content: space-between;
  padding: 0 6px 0 12px;
  font-family: "Liberation Sans", sans-serif;
  font-size: 17.5px;
  color: #9a9a9a;
}

.filter svg {
  width: 21px;
  height: 21px;
  fill: #616161;
}

.crumbs {
  height: 43px;
  padding-left: 18px;
  display: flex;
  align-items: center;
  gap: 4.5px;
  font-size: 15.4px;
}

.crumbs svg {
  width: 19px;
  height: 19px;
  fill: #616161;
}

.crumbs .dots {
  margin: 0 8px 0 13px;
  font-size: 8px;
  letter-spacing: 1px;
  color: #555;
}

.listhead {
  height: 32px;
  border-top: 1px solid #e0e0e0;
  border-bottom: 2px solid #ccc;
  display: flex;
  font-weight: 600;
  font-size: 15.2px;
  color: #222;
}

.col-name {
  width: 143px;
  padding-left: 15px;
  line-height: 32px;
  border-right: 1px solid #ddd;
  display: flex;
  position: relative;
}

.caret {
  position: absolute;
  left: 109px;
  top: 11px;
  width: 0;
  height: 0;
  border-left: 5.5px solid transparent;
  border-right: 5.5px solid transparent;
  border-bottom: 6px solid #616161;
}

.col-mod {
  flex: 1;
  text-align: right;
  padding-right: 15px;
  line-height: 32px;
}

.filerow {
  height: 30.7px;
  display: flex;
  align-items: center;
  fill: #e65100;
  color: #333;
  font-size: 15.3px;
  padding-top: 1px;
}

.filerow svg {
  width: 20px;
  height: 20px;
  flex: none;
  margin-left: 8px;
  margin-top: -2px;
}

.filerow .dot {
  width: 4px;
  height: 4px;
  border-radius: 50%;
  margin-left: 6px;
  background: #fff;
}

.dot.green {
  background: #388e3c;
}

.dot.none {
  background: transparent;
}

.filerow.sel {
  background: #1976d2;
  color: #fff;
  fill: #fff;
}

.fname {
  margin-left: 7px;
  white-space: nowrap;
}

.fdate {
  margin-left: auto;
  padding-right: 15px;
  white-space: nowrap;
}

/* main area */
.main {
  width: 1466px;
  background: #bdbdbd;
  padding: 7px 9px 8px;
  display: flex;
  flex-direction: column;
}

.doctabs {
  height: 32px;
  display: flex;
  font-size: 15px;
  color: #222;
}

.doctab {
  display: flex;
  align-items: center;
  background: #eee;
  border-right: 1px solid #c8c8c8;
  border-bottom: 1px solid #c8c8c8;
  fill: #e65100;
}

.doctab svg {
  width: 18px;
  height: 18px;
  flex: none;
  margin-left: 9px;
}

.doctab.cur {
  width: 268px;
  background: #fff;
  border-top: 3px solid #1976d2;
  border-bottom: 0;
  border-right: 0;
  padding-bottom: 2px;
}

.dt-name {
  margin-left: 7px;
  white-space: nowrap;
}

.dirty {
  width: 12px;
  height: 12px;
  border-radius: 50%;
  background: #616161;
  margin-left: 4px;
}

.doctab.two {
  width: 269px;
  color: #444;
}

.dt-name.fade {
  width: 206px;
  overflow: hidden;
  letter-spacing: -.1px;
  -webkit-mask-image: linear-gradient(90deg, #000 94%, transparent 100%);
  mask-image: linear-gradient(90deg, #000 94%, transparent 100%);
}

.doctab svg.dt-x {
  width: 14px;
  height: 14px;
  margin-left: 2px;
  color: #616161;
}

.doctab.plus {
  width: 33px;
  justify-content: center;
  fill: #616161;
}

.doctab.plus svg {
  margin: 0;
}

.nbtools {
  height: 36px;
  background: #fff;
  border-bottom: 1px solid #ccc;
  display: flex;
  align-items: center;
  padding-left: 12px;
  gap: 17.4px;
  fill: #616161;
}

.nbtools svg {
  width: 20px;
  height: 20px;
  flex: none;
}

.nbtools .celltype {
  margin-left: 5px;
  font-size: 15px;
  color: #222;
  width: 65px;
  padding-bottom: 2px;
}

.nbtools .chev {
  width: 13px;
  height: 13px;
}

.kernel {
  margin-left: auto;
  font-size: 15.7px;
  color: #333;
  margin-right: -4px;
  padding-bottom: 2px;
}

.kstatus {
  width: 18px;
  height: 18px;
  border-radius: 50%;
  border: 1.5px solid #616161;
  margin-right: 8px;
}

.notebook {
  flex: 1;
  background: #fff;
  display: flex;
  min-height: 0;
}

.cells {
  flex: 1;
  padding-top: 34px;
}

.cells h1,
.cells p {
  margin: 0 0 16px 116px;
  height: 30px;
  line-height: 30px;
  color: #222;
  -webkit-text-stroke: .3px #222;
}

.cells h1 {
  font-size: 23.85px;
  font-weight: 500;
  margin-bottom: 18px;
}

.cells p {
  font-size: 19.7px;
  font-weight: 500;
}

.cells p:last-of-type {
  margin-bottom: 17px;
}

.codecell {
  display: flex;
  height: 56px;
  margin-left: 19px;
  margin-right: 22px;
}

.collapser {
  width: 10px;
  background: #1976d2;
  border-radius: 2px;
}

.prompt {
  width: 80px;
  padding-right: 9px;
  padding-top: 11px;
  text-align: right;
  font-family: "Liberation Mono", monospace;
  font-size: 14px;
  color: #4a90d9;
  white-space: pre;
}

.input {
  flex: 1;
  background: #f5f5f5;
  border: 1px solid #e0e0e0;
  display: flex;
  justify-content: flex-end;
  padding: 6px 4px 0 0;
  fill: #616161;
}

.input svg {
  width: 37.4px;
  height: 24px;
}

.input .cell-dup {
  height: 19px;
  margin-top: 1px;
}

.scroll {
  width: 11px;
  margin-right: 4px;
  padding-top: 10px;
  display: flex;
  flex-direction: column;
  align-items: center;
}

.arr {
  width: 0;
  height: 0;
  border-left: 5.5px solid transparent;
  border-right: 5.5px solid transparent;
}

.arr.up {
  border-bottom: 8px solid #8a8a8a;
}

.arr.dn {
  border-top: 8px solid #8a8a8a;
  margin-bottom: 8px;
}

.track {
  flex: 1;
  width: 11px;
  padding-top: 9px;
  padding-bottom: 180px;
}

.thumb {
  height: 100%;
  background: #8f8f8f;
  border-radius: 6px;
}

.rightbar {
  flex: 1;
  background: #eee;
  display: flex;
  justify-content: center;
  padding-top: 21px;
  fill: #616161;
}

.rightbar svg {
  width: 22px;
  height: 24px;
}

.statusbar {
  height: 30px;
  background: #eee;
  display: flex;
  align-items: center;
  font-size: 15.2px;
  color: #333;
  flex: none;
}

.simple { margin-left: 35px; }

.toggle {
  margin-left: 7px;
  width: 44px;
  height: 20px;
  border-radius: 10px;
  background: #bdbdbd;
  padding: 3px 4px;
}

.toggle i {
  width: 14px;
  height: 14px;
  border-radius: 50%;
  background: #fff;
}

.st-0 { margin-left: 32px; }

.term {
  margin-left: 14px;
  width: 19px;
  height: 19px;
  background: #444;
  color: #fff;
  font-size: 11px;
  font-weight: 700;
  line-height: 19px;
  text-align: center;
}

.st-2 { margin-left: 12px; }

.chip {
  width: 19px;
  height: 19px;
  margin-left: 13px;
}

.st-kernel { margin-left: 23px; }
.st-mode { margin-left: auto; }

.shield {
  width: 20px;
  height: 20px;
  margin-left: 23px;
}

.st-ln { margin-left: 22px; }
.st-file { margin-left: 21px; margin-right: 22px; }

/* edge sidebar */
.edgebar {
  flex: 1;
  padding-top: 2px;
  padding-bottom: 3px;
  display: flex;
  flex-direction: column;
  align-items: center;
  padding-right: 2px;
}

.eb {
  width: 24px;
  height: 24px;
  flex: none;
  margin: 13.25px 0;
}

.eb.first {
  margin: 14px 0 12px;
}

.eb.box {
  margin-bottom: 11px;
}

.eb.plus {
  margin-top: 16px;
  width: 22px;
  height: 22px;
}

.eb-bottom {
  margin-top: auto;
  display: flex;
  flex-direction: column;
  align-items: center;
}

.eb-bottom .eb {
  margin: 13px 0;
}

.eb-line {
  width: 36px;
  height: 1px;
  background: #aaa;
}

/* windows taskbar */
.taskbar {
  height: 60px;
  flex: none;
  display: flex;
  align-items: center;
  background: linear-gradient(90deg, #e6f0f9 0, #dfeaf8 400px, #d4e0f6 800px, #d6dff3 1200px, #e2edf9 1500px, #e4eff9 1920px);
  border-top: 1px solid #e6ebf2;
}

.weather {
  width: 695px;
  display: flex;
  align-items: center;
  position: relative;
  padding-left: 26px;
}

.wicon {
  width: 30px;
  height: 28px;
}

.wbadge {
  position: absolute;
  left: 40px;
  top: -1px;
  width: 20px;
  height: 20px;
  border-radius: 50%;
  background: #c42b1c;
  color: #fff;
  font-size: 13px;
  line-height: 20px;
  text-align: center;
}

.wtext {
  margin-left: 9px;
  font-size: 14px;
  line-height: 20px;
  color: #222;
}

.wsub {
  color: #555;
}

.tb-center {
  display: flex;
  align-items: center;
}

.startbtn {
  width: 29px;
  height: 29px;
}

.searchbox {
  margin-left: 18px;
  width: 273px;
  height: 38px;
  border-radius: 19px;
  background: #f3f7fd;
  box-shadow: 0 0 1px #8b9bb8;
  display: flex;
  align-items: center;
  overflow: hidden;
}

.sb-icon {
  width: 22px;
  height: 22px;
  margin-left: 14px;
}

.sb-text {
  margin-left: 10px;
  font-size: 16px;
  color: #555;
}

.sb-art {
  margin-left: auto;
  width: 66px;
  height: 38px;
}

.tv {
  width: 29px;
  height: 29px;
  margin-left: 16px;
}

.tbapp {
  display: flex;
  flex-direction: column;
  align-items: center;
  position: relative;
}

.tbapp svg {
  width: 30px;
  height: 28px;
}

.rundot {
  position: absolute;
  bottom: -9px;
  width: 8px;
  height: 4px;
  border-radius: 2px;
  background: #777;
}

.app-f { margin-left: 26px; }

.app-e {
  margin-left: 16px;
  width: 48px;
  height: 48px;
  background: #eef3fb;
  border-radius: 4px;
  justify-content: center;
}

.app-e svg {
  width: 32px;
  height: 32px;
}

.rundot.act-bar {
  bottom: 0;
  width: 20px;
  height: 4px;
  background: #0a6fd8;
}

.app-n {
  margin-left: 20px;
}

.app-n svg {
  width: 22px;
  height: 30px;
}

.tray {
  flex: 1;
  display: flex;
  align-items: center;
  padding-left: 312px;
}

.tray > svg {
  width: 20px;
  height: 20px;
  margin-right: 20px;
}

.tray > svg:nth-child(n+5) {
  margin-right: 10px;
}

.traynum {
  font-size: 6px;
  fill: #fff;
  text-anchor: middle;
}

.clock {
  width: 82px;
  text-align: right;
  font-size: 14px;
  line-height: 20px;
  color: #222;
}

.notif {
  margin-left: 10px;
  width: 20px;
  height: 20px;
  border-radius: 50%;
  background: #0067c0;
  color: #fff;
  font-size: 13px;
  line-height: 20px;
  text-align: center;
}
```
